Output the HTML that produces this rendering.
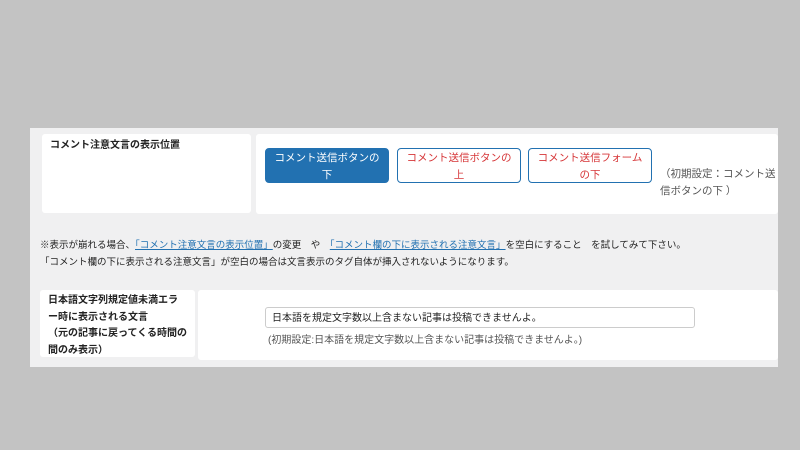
<!DOCTYPE html>
<html><head><meta charset="utf-8"><style>
body{margin:0;width:800px;height:450px;background:#c3c3c3;position:relative;overflow:hidden;font-family:"Liberation Sans","Noto Sans CJK JP",sans-serif;color:#222}
.p{position:absolute;left:30px;top:128px;width:748px;height:239px;background:#f0f0f1}
.b{position:absolute;background:#fff;border-radius:3px}
.lab{font-weight:bold;font-size:10px;line-height:16px;padding:4px 8px}
.btn{position:absolute;top:148px;width:124px;height:35px;border:1.5px solid #2271b1;border-radius:4px;font-size:10.5px;line-height:17px;text-align:center;color:#d63638;background:#fff;box-sizing:border-box;padding-top:1px}
.t{position:absolute;font-size:9.5px;white-space:nowrap}
a{color:#2271b1;text-decoration:underline}
</style></head><body>
<div class="p"></div>
<div class="b lab" style="left:42px;top:134px;width:193px;height:71px">コメント注意文言の表示位置</div>
<div class="b" style="left:256px;top:134px;width:522px;height:80px"></div>
<div class="btn" style="left:265px;background:#2271b1;color:#fff">コメント送信ボタンの<br>下</div>
<div class="btn" style="left:397px">コメント送信ボタンの<br>上</div>
<div class="btn" style="left:528px">コメント送信フォーム<br>の下</div>
<div class="t" style="left:660px;top:166px;font-size:10.5px;line-height:17px;color:#555">（初期設定：コメント送<br>信ボタンの下 ）</div>
<div class="t" style="left:40px;top:237px">※表示が崩れる場合、<a>「コメント注意文言の表示位置」</a>の変更　や　<a>「コメント欄の下に表示される注意文言」</a>を空白にすること　を試してみて下さい。</div>
<div class="t" style="left:40px;top:254px">「コメント欄の下に表示される注意文言」が空白の場合は文言表示のタグ自体が挿入されないようになります。</div>
<div class="b lab" style="left:40px;top:290px;width:139px;height:61px;padding:3px 8px;line-height:16.5px">日本語文字列規定値未満エラー時に表示される文言<br>（元の記事に戻ってくる時間の間のみ表示）</div>
<div class="b" style="left:198px;top:290px;width:580px;height:70px"></div>
<div style="position:absolute;left:265px;top:307px;width:430px;height:21px;border:1px solid #ccc;border-radius:3px;background:#fff;font-size:10px;line-height:21px;padding-left:6px;box-sizing:border-box">日本語を規定文字数以上含まない記事は投稿できませんよ。</div>
<div class="t" style="left:268px;top:331px;font-size:10px;color:#555">(初期設定:日本語を規定文字数以上含まない記事は投稿できませんよ。)</div>
</body></html>
